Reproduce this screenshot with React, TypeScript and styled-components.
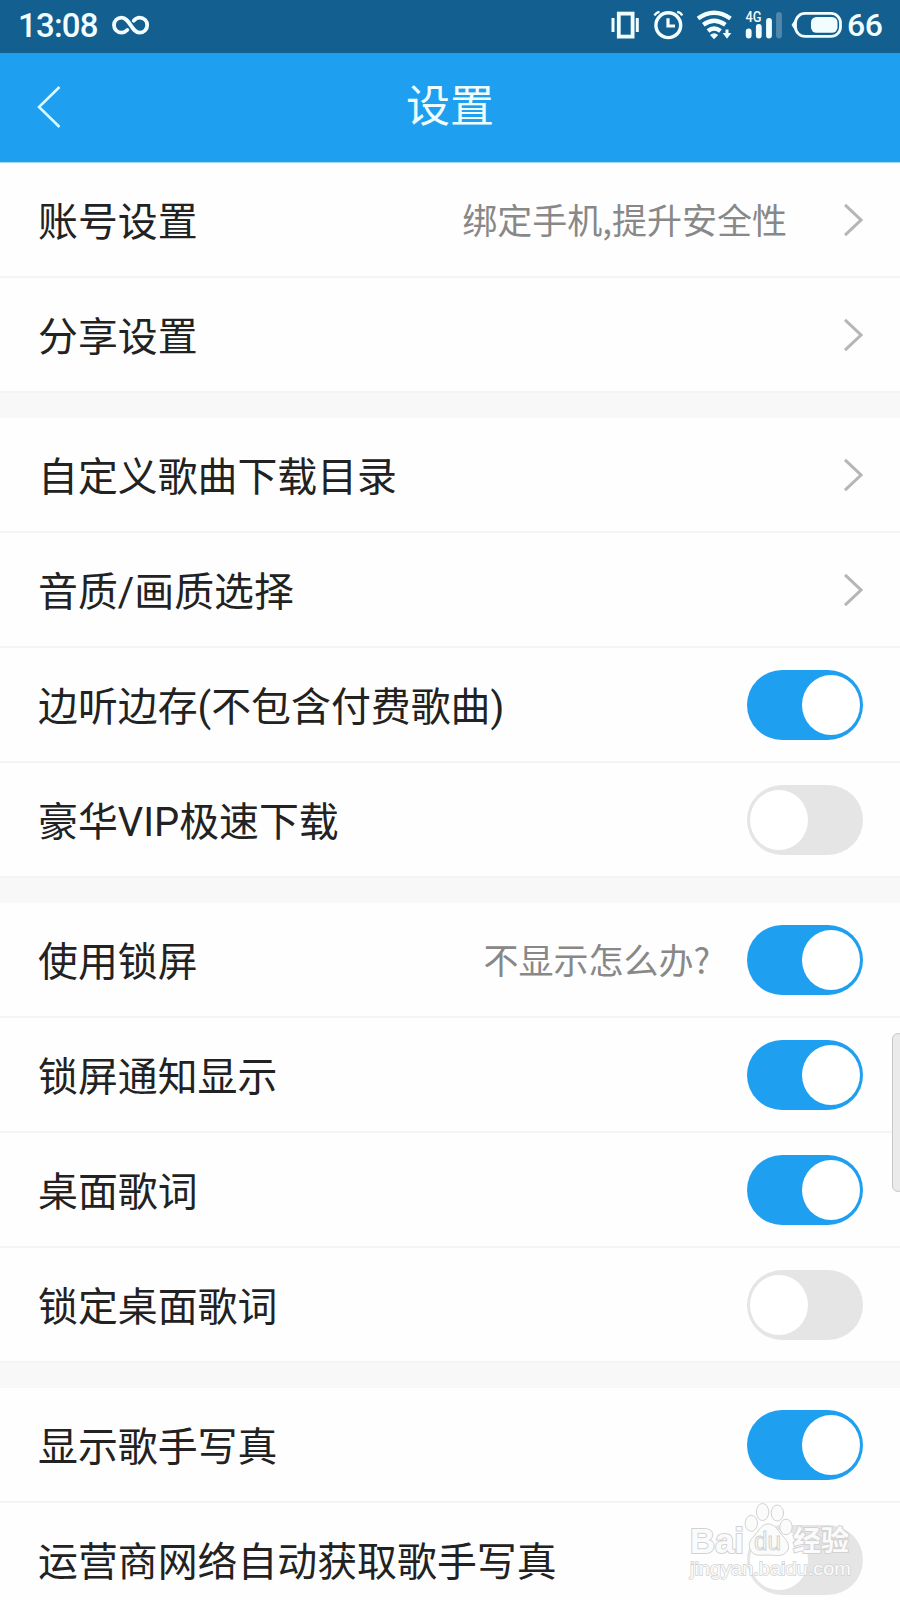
import React from "react";
import styled, { createGlobalStyle } from "styled-components";

const Global = createGlobalStyle`
  * { box-sizing: border-box; }
  body {
    margin: 0;
    background: #f8f8f8;
    font-family: Roboto, "Noto Sans CJK SC", sans-serif;
    overflow: hidden;
  }
`;

const Screen = styled.div`
  position: relative;
  width: 900px;
  height: 1600px;
  overflow: hidden;
  background: #f8f8f8;
`;

const StatusBar = styled.div`
  height: 53px;
  padding: 0 17px 3px 18px;
  display: flex;
  align-items: center;
  justify-content: space-between;
  background: #125f90;
  color: #f2fdff;
  line-height: 50px;
`;

const StatusGroup = styled.div`
  display: flex;
  align-items: center;
`;

const Clock = styled.span`
  width: 94px;
  padding-top: 2px;
  font-weight: 500;
  font-size: 33px;
  letter-spacing: -0.8px;
  white-space: nowrap;
`;

const BatteryLevel = styled.span`
  width: 36px;
  font-size: 32px;
  font-weight: 500;
  letter-spacing: -0.5px;
`;

const Header = styled.header`
  height: 110px;
  padding: 0 36px;
  display: grid;
  grid-template-columns: 60px 1fr 60px;
  align-items: center;
  border-bottom: 1px solid #a5d8f8;
  background: #1e9ff0;
  color: #f0fdff;
`;

const BackArrow = styled.svg`
  margin-bottom: 2px;
`;

const Title = styled.h1`
  margin: 0;
  padding-bottom: 1px;
  font-size: 44px;
  font-weight: 400;
  line-height: 60px;
  text-align: center;
`;

const Section = styled.section`
  margin-bottom: 25px;
  background: #fefefe;
`;

const Row = styled.div`
  height: 115px;
  padding: 1px 37px 0 38px;
  display: flex;
  align-items: center;
  border-bottom: 2px solid #f4f4f4;
`;

const Label = styled.span`
  flex: 1;
  color: #222;
  font-size: 39.9px;
  line-height: 60px;
  white-space: nowrap;
  padding-top: 6px;
`;

const Note = styled.span<{ $gap: number }>`
  margin-right: ${(p) => p.$gap}px;
  padding-bottom: 2px;
  color: #888;
  font-family: "Noto Sans CJK SC", sans-serif;
  font-size: 35px;
  line-height: 50px;
  white-space: nowrap;
`;

const Track = styled.span<{ $on?: boolean }>`
  width: 116px;
  height: 70px;
  padding: 5px 3px;
  display: flex;
  flex: none;
  justify-content: ${(p) => (p.$on ? "flex-end" : "flex-start")};
  border-radius: 35px;
  background: ${(p) => (p.$on ? "#1e9ff0" : "#e5e5e5")};
`;

const Knob = styled.span`
  width: 58px;
  height: 60px;
  border-radius: 50%;
  background: #fff;
`;

const EdgeHandle = styled.div`
  position: absolute;
  left: 892px;
  top: 1033px;
  width: 12px;
  height: 159px;
  border: 1.5px solid #c8c8c8;
  border-radius: 8px;
  background: #ebebeb;
`;

const Watermark = styled.svg`
  position: absolute;
  left: 680px;
  top: 1496px;
`;

const Chevron = () => (
  <svg width="20" height="34" viewBox="0 0 20 34" fill="none" stroke="#b6b6b6" strokeWidth="3">
    <path d="M2 1.8L18 17L2 32.2" />
  </svg>
);

const InfinityIcon = () => (
  <svg width="38" height="20" viewBox="0 0 38 20" fill="none" stroke="#f2fdff" strokeWidth="3.8" strokeLinecap="round">
    <path d="M15.3 15C13.5 16.9 12 17.7 9.6 17.7C5.2 17.7 2 14.4 2 10.2C2 5.9 5.2 2.6 9.6 2.6C17.6 2.6 19.6 17.7 27.6 17.7C32 17.7 35.2 14.4 35.2 10.2C35.2 5.9 32 2.6 27.6 2.6C25.2 2.6 23.6 3.6 21.7 5.7" />
  </svg>
);

const StatusIcons = () => (
  <svg width="236" height="50" viewBox="611 0 236 50" fill="none" stroke="#f2fdff">
    <g strokeWidth="3.8">
      <rect x="618.8" y="13.6" width="13.8" height="23" />
      <path d="M613 18V32M637.3 18V32" strokeWidth="3" />
    </g>
    <circle cx="668.3" cy="25.2" r="12.4" strokeWidth="3.4" />
    <path d="M668 18.3V26H675" strokeWidth="3.2" />
    <path d="M654.5 15.5Q656 12.5 659.5 11.8M677.2 11.8Q681 12.5 682.2 15.5" strokeWidth="2.3" />
    <g strokeWidth="4.4">
      <path d="M698 18.5Q714 7 730.5 18.5" />
      <path d="M703.3 24.8Q714 16.7 725.4 24.8" />
      <path d="M708 31Q714 26 720.5 31" />
    </g>
    <path d="M710 35Q714 31.5 718.2 35L714 39.3Z" fill="#f2fdff" stroke="none" />
    <path d="M727 29.5V34" strokeWidth="3" />
    <path d="M722.7 33H731.3L727 38.7Z" fill="#f2fdff" stroke="none" />
    <text x="745.5" y="21.5" fontSize="14" fontWeight="500" fill="#f2fdff" stroke="none" textLength="16" lengthAdjust="spacingAndGlyphs">4G</text>
    <g strokeLinecap="round" strokeWidth="5.8">
      <path d="M748.7 31.5V35.5M758.8 26.8V35.5M769 21V35.5" />
      <path d="M779 14.8V35.5" stroke="#5187ac" />
    </g>
    <rect x="795.5" y="13.4" width="45" height="23" rx="9.5" strokeWidth="2.8" />
    <rect x="811" y="17" width="26.5" height="15.8" rx="5.5" fill="#f2fdff" stroke="none" />
    <path d="M795 20.5L792 25L795 29.5Z" fill="#f2fdff" />
  </svg>
);

type Item = { label: string; note?: string; toggle?: "on" | "off" };

const sections: Item[][] = [
  [{ label: "账号设置", note: "绑定手机,提升安全性" }, { label: "分享设置" }],
  [
    { label: "自定义歌曲下载目录" },
    { label: "音质/画质选择" },
    { label: "边听边存(不包含付费歌曲)", toggle: "on" },
    { label: "豪华VIP极速下载", toggle: "off" },
  ],
  [
    { label: "使用锁屏", note: "不显示怎么办?", toggle: "on" },
    { label: "锁屏通知显示", toggle: "on" },
    { label: "桌面歌词", toggle: "on" },
    { label: "锁定桌面歌词", toggle: "off" },
  ],
  [
    { label: "显示歌手写真", toggle: "on" },
    { label: "运营商网络自动获取歌手写真", toggle: "off" },
  ],
];

const SettingRow = ({ label, note, toggle }: Item) => (
  <Row>
    <Label>{label}</Label>
    {note && <Note $gap={toggle ? 37 : 56}>{note}</Note>}
    {toggle ? (
      <Track $on={toggle === "on"}>
        <Knob />
      </Track>
    ) : (
      <Chevron />
    )}
  </Row>
);

const BaiduMark = () => (
  <Watermark width="190" height="90" viewBox="680 1496 190 90" fill="#fbfbfb" stroke="#d2d2d2" strokeWidth="1">
    <g fontFamily="Liberation Sans, Noto Sans CJK SC, sans-serif" fontWeight="700" paintOrder="stroke">
      <text x="690" y="1552.5" fontSize="35" strokeWidth="2" textLength="54" lengthAdjust="spacingAndGlyphs">Bai</text>
      <text x="793" y="1550.5" fontSize="28" strokeWidth="2" textLength="56" lengthAdjust="spacingAndGlyphs">经验</text>
    </g>
    <ellipse cx="751.3" cy="1523.3" rx="6.2" ry="8" />
    <ellipse cx="762.6" cy="1512" rx="6.2" ry="8.5" />
    <ellipse cx="777.3" cy="1513" rx="6.2" ry="8" />
    <ellipse cx="786" cy="1527" rx="6.2" ry="7.8" />
    <path d="M768 1524C762 1524 759 1530 755 1535C750 1540 748 1544 750 1549C753 1557 761 1555 768 1555C776 1555 783 1558 788 1550C790 1544 786 1539 781 1534C777 1529 775 1524 768 1524Z" />
    <text x="754" y="1549.5" fontSize="26" fontFamily="Liberation Sans, sans-serif" textLength="27" lengthAdjust="spacingAndGlyphs">du</text>
    <text x="690" y="1575" fontSize="19" fontFamily="Liberation Sans, sans-serif" strokeWidth="1.4" paintOrder="stroke" textLength="161" lengthAdjust="spacingAndGlyphs">jingyan.baidu.com</text>
  </Watermark>
);

export default function App() {
  return (
    <Screen>
      <Global />
      <StatusBar>
        <StatusGroup>
          <Clock>13:08</Clock>
          <InfinityIcon />
        </StatusGroup>
        <StatusGroup>
          <StatusIcons />
          <BatteryLevel>66</BatteryLevel>
        </StatusGroup>
      </StatusBar>
      <Header>
        <BackArrow width="26" height="44" viewBox="0 0 26 44" fill="none" stroke="#d8faff" strokeWidth="2.6">
          <path d="M23.5 2L3 22L23.5 42" />
        </BackArrow>
        <Title>设置</Title>
      </Header>
      {sections.map((items, i) => (
        <Section key={i}>
          {items.map((item) => (
            <SettingRow key={item.label} {...item} />
          ))}
        </Section>
      ))}
      <EdgeHandle />
      <BaiduMark />
    </Screen>
  );
}
